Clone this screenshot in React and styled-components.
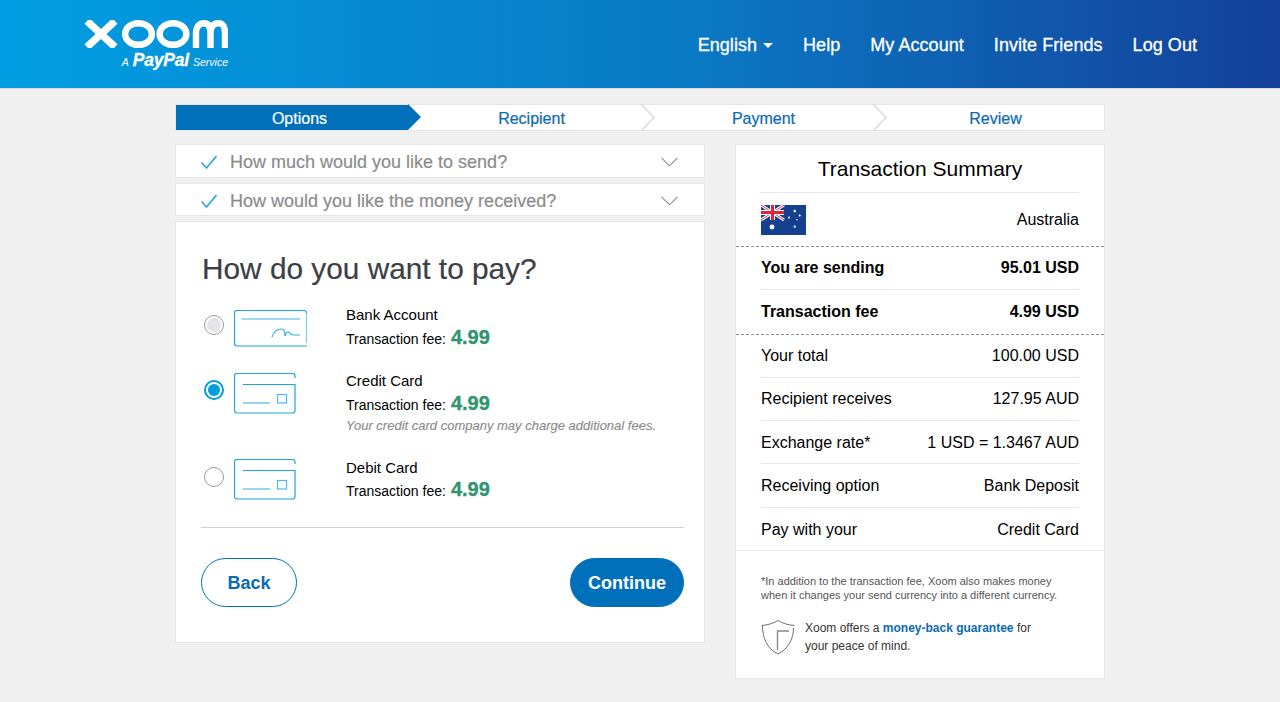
import React from "react";
import styled, { createGlobalStyle } from "styled-components";

const GlobalStyle = createGlobalStyle`
  html, body { margin: 0; padding: 0; background: #f0f0f0; }
  body { font-family: "Liberation Sans", Arial, sans-serif; color: #000; }
  * { box-sizing: border-box; }
`;

const Page = styled.div`
  width: 1280px;
  height: 702px;
  overflow: hidden;
  background: #f0f0f0;
`;

const Header = styled.header`
  height: 89px;
  padding: 20px 83px 0 84px;
  display: flex;
  justify-content: space-between;
  background: linear-gradient(90deg, #009ee2 0%, #0a78c4 55%, #14409a 100%);
  border-bottom: 1px solid #dcdcdc;
`;

const Logo = styled.div`
  width: 144px;
  display: flex;
  flex-direction: column;
  align-items: flex-end;
  color: #fff;
  svg { display: block; }
`;

const LogoSub = styled.div`
  margin-top: 4px;
  display: flex;
  align-items: baseline;
  gap: 4px;
  font-size: 10.5px;
  font-style: italic;
  line-height: 16px;
  b {
    font-size: 17.5px;
    font-weight: 700;
    letter-spacing: -0.2px;
    -webkit-text-stroke: 0.3px #fff;
  }
`;

const Nav = styled.nav`
  display: flex;
  gap: 30px;
  padding: 12px 0 0 0;
  height: 38px;
`;

const NavLink = styled.a`
  color: #fff;
  font-size: 18px;
  line-height: 21px;
  letter-spacing: 0.05px;
  -webkit-text-stroke: 0.3px #fff;
  display: flex;
  align-items: center;
  gap: 6px;
`;

const Caret = styled.span`
  width: 0;
  height: 0;
  border-left: 5px solid transparent;
  border-right: 5px solid transparent;
  border-top: 5px solid #fff;
`;

const Content = styled.main`
  width: 930px;
  margin: 15px 0 0 175px;
`;

const Stepper = styled.ol`
  list-style: none;
  margin: 0;
  padding: 0;
  height: 27px;
  display: flex;
  background: #fff;
  border: 1px solid #e6e6e6;
`;

const Step = styled.li`
  position: relative;
  flex: 1;
  padding-left: 15px;
  text-align: center;
  font-size: 16px;
  line-height: 27px;
  -webkit-text-stroke: 0.2px ${(p) => (p.$active ? "#fff" : "#0a6ab4")};
  color: ${(p) => (p.$active ? "#fff" : "#0a6ab4")};
  background: ${(p) => (p.$active ? "#0070ba" : "transparent")};
  svg {
    position: absolute;
    top: -1px;
    left: ${(p) => (p.$active ? "100%" : "calc(100% + 1px)")};
    z-index: 1;
  }
`;

const Columns = styled.div`
  margin-top: 13px;
  display: flex;
  justify-content: space-between;
  align-items: flex-start;
`;

const LeftColumn = styled.div`
  width: 530px;
  display: flex;
  flex-direction: column;
  gap: 5px;
`;

const Collapsed = styled.div`
  height: ${(p) => p.$h}px;
  padding: ${(p) => 36 - p.$h}px 26px 0 25px;
  display: flex;
  align-items: center;
  background: #fff;
  border: 1px solid #e6e6e6;
  color: #8c8c8c;
  font-size: 18px;
  -webkit-text-stroke: 0.2px #8c8c8c;
  svg:first-child { margin-right: 12px; }
  span { flex: 1; }
`;

const PayCard = styled.section`
  height: 422px;
  padding: 28px 20px 0 25px;
  background: #fff;
  border: 1px solid #e6e6e6;
`;

const Heading = styled.h2`
  margin: 0 0 19px 1px;
  font-size: 29.8px;
  line-height: 37px;
  font-weight: 400;
  color: #3b4045;
  -webkit-text-stroke: 0.2px #3b4045;
`;

const Methods = styled.div`
  display: flex;
  flex-direction: column;
  height: 222px;
  border-bottom: 1px solid #cfcfcf;
`;

const Method = styled.div`
  height: ${(p) => p.$h}px;
  display: grid;
  grid-template-columns: 33px 112px 1fr;
  align-items: start;
`;

const Radio = styled.span`
  margin: ${(p) => p.$top}px 0 0 3px;
  width: 20px;
  height: 20px;
  border-radius: 50%;
  border: 1.5px solid #9a9a9a;
  background: #fff;
  display: flex;
  align-items: center;
  justify-content: center;
  ${(p) => p.$checked && "border: 2px solid #009cde;"}
  &::after {
    content: "";
    width: ${(p) => (p.$checked ? 12 : 14)}px;
    height: ${(p) => (p.$checked ? 12 : 14)}px;
    border-radius: 50%;
    background: ${(p) => (p.$checked ? "#009cde" : p.$disabled ? "#e4e4e6" : "transparent")};
  }
`;

const MethodIcon = styled.div`
  margin-top: ${(p) => p.$top}px;
  svg { display: block; }
`;

const MethodText = styled.div`
  font-size: 14px;
  line-height: 16px;
  padding-top: ${(p) => p.$top || 0}px;
`;

const MethodName = styled.div`
  font-size: 15px;
`;

const FeeLine = styled.div`
  margin-top: ${(p) => p.$gap ?? 2}px;
  height: 24px;
  display: flex;
  align-items: baseline;
  gap: 5px;
  line-height: 24px;
  b {
    font-size: 20px;
    color: #2f9470;
    -webkit-text-stroke: 0.3px #2f9470;
  }
`;

const Note = styled.div`
  margin-top: 3px;
  font-size: 13px;
  line-height: 16px;
  font-style: italic;
  color: #8c8c8c;
  -webkit-text-stroke: 0.15px #8c8c8c;
`;

const Actions = styled.div`
  margin-top: 30px;
  display: flex;
  justify-content: space-between;
`;

const Pill = styled.button`
  height: 49px;
  width: ${(p) => (p.$primary ? 114 : 96)}px;
  border-radius: 25px;
  border: 1px solid #0070ba;
  background: ${(p) => (p.$primary ? "#0070ba" : "#fff")};
  color: ${(p) => (p.$primary ? "#fff" : "#0a6ab4")};
  font-family: inherit;
  font-size: 18px;
  font-weight: 700;
  padding: 1px 0 0 0;
`;

const Summary = styled.aside`
  width: 370px;
  height: 535px;
  background: #fff;
  border: 1px solid #e6e6e6;
`;

const SummaryTitle = styled.h3`
  margin: 0 25px;
  height: 48px;
  line-height: 48px;
  text-align: center;
  font-size: 21px;
  font-weight: 400;
  border-bottom: 1px solid #e6e6e6;
`;

const CountryRow = styled.div`
  height: 54px;
  padding: 0 25px;
  display: flex;
  align-items: center;
  justify-content: space-between;
  font-size: 16px;
  border-bottom: 1px dashed #8a8a8a;
`;

const Row = styled.div`
  margin: 0 25px;
  height: 43.3px;
  padding-top: 0.7px;
  display: flex;
  align-items: center;
  justify-content: space-between;
  font-size: 16px;
  font-weight: ${(p) => (p.$bold ? 700 : 400)};
  border-bottom: 1px solid #e6e6e6;
  &:last-child {
    border-bottom: 0;
  }
`;

const DashedSep = styled.div`
  border-bottom: 1px dashed #8a8a8a;
  ${Row}:last-child { border-bottom: 0; }
`;

const RowsEnd = styled.div`
  border-bottom: 1px solid #e6e6e6;
  ${Row}:last-child {
    height: 42.3px;
    padding-top: 2.7px;
  }
`;

const Footnote = styled.p`
  margin: 0;
  padding: 23px 25px 0 25px;
  font-size: 11px;
  line-height: 14px;
  color: #555;
`;

const Guarantee = styled.div`
  margin-top: 17px;
  padding: 0 25px;
  display: flex;
  gap: 10px;
  font-size: 12px;
  line-height: 18px;
  color: #333;
  svg { flex: none; margin-top: 1px; }
  b { color: #0a6ab4; }
`;

function Chevron({ tone = "#d9d9d9" }) {
  return (
    <svg width="14" height="27" viewBox="0 0 14 27" fill="#fff">
      <path d="M0 0 L13 13.5 L0 27" stroke={tone} strokeWidth="1.4" />
    </svg>
  );
}

function ActiveArrow() {
  return (
    <svg width="13" height="26" viewBox="0 0 13 26">
      <path d="M0 0 L13 13 L0 26 Z" fill="#0070ba" />
    </svg>
  );
}

function Check() {
  return (
    <svg width="17" height="14" viewBox="0 0 17 14" fill="none">
      <path d="M0.5 7.5 L5.5 13 L15.5 1" stroke="#18a3e0" strokeWidth="1.5" />
    </svg>
  );
}

function DownChevron() {
  return (
    <svg width="17" height="10" viewBox="0 0 17 10" fill="none">
      <path d="M0.5 0.8 L8.5 8.8 L16.5 0.8" stroke="#8c8c8c" strokeWidth="1.1" />
    </svg>
  );
}

function LogoMark() {
  return (
    <svg width="144" height="28" viewBox="0 0 144 28" fill="none" stroke="#fff" strokeWidth="6.4">
      <path d="M3 1 L31 27 M31 1 L3 27" strokeWidth="7.4" />
      <ellipse cx="54.5" cy="14" rx="13.4" ry="10.8" />
      <ellipse cx="89" cy="14" rx="13.4" ry="10.8" />
      <path d="M112 28 V13 C112 6 116 3.2 120 3.2 C124 3.2 126.5 6 126.5 13 V28 M126.5 13 C126.5 6 130 3.2 134 3.2 C139 3.2 141 6 141 13 V28" />
    </svg>
  );
}

function BankIcon() {
  return (
    <svg width="74" height="37" viewBox="0 0 74 37" fill="none" stroke="#1aa7e0" strokeWidth="1.2">
      <path d="M3 36 H73 M3 36 Q0.5 36 0.5 33.5 V3 Q0.5 0.5 3 0.5 H70 Q72.5 0.5 72.5 3" />
      <path d="M72.5 3 V33" stroke="#7fcdee" />
      <path d="M7.5 9 H66" stroke="#7fcdee" strokeWidth="1.6" />
      <path d="M38 27 C40 21 44 19 47 19 C50 19 51 22 51 26 C52 22 54 21 56 23 C57 25 59 25 60 24.5 M60 25 H66" stroke="#35b0e4" />
    </svg>
  );
}

function CardIcon() {
  return (
    <svg width="62" height="41" viewBox="0 0 62 41" fill="none" stroke="#1aa7e0" strokeWidth="1.2">
      <path d="M61 5 V3 Q61 0.5 58.5 0.5 H3 Q0.5 0.5 0.5 3 V37.5 Q0.5 40 3 40 H58.5 Q61 40 61 37.5 V11.5 H9" />
      <path d="M9 30 H36" stroke="#4dbbe8" />
      <rect x="43.5" y="21.5" width="9" height="8.5" stroke="#4dbbe8" />
    </svg>
  );
}

function AusFlag() {
  const stars = [[33.7, 6, 1.2], [28, 12.5, 1], [38.7, 10.5, 1], [36, 14.7, 0.7], [33.7, 21.7, 1.1]];
  return (
    <svg width="45" height="30" viewBox="0 0 45 30">
      <rect width="45" height="30" fill="#14408f" />
      <path d="M0 0 L23 15 M23 0 L0 15" stroke="#fff" strokeWidth="3" />
      <path d="M0 0 L23 15 M23 0 L0 15" stroke="#e0324a" strokeWidth="1" />
      <path d="M11.5 0 V15 M0 7.5 H23" stroke="#fff" strokeWidth="5" />
      <path d="M11.5 0 V15 M0 7.5 H23" stroke="#e0223c" strokeWidth="3" />
      <circle cx="11" cy="22" r="2.4" fill="#fff" />
      {stars.map(([x, y, r]) => (
        <circle key={`${x}-${y}`} cx={x} cy={y} r={r} fill="#fff" />
      ))}
    </svg>
  );
}

function Shield() {
  return (
    <svg width="34" height="35" viewBox="0 0 34 35" fill="none" stroke="#6f6f6f">
      <path d="M0.5 5.5 C7 5 12 3.5 17 0.5 C22 3.5 27 5 33.5 5.5" />
      <path d="M1.5 5.5 C1.5 18 6 28.5 17 34 C28 28.5 32.5 18 32.5 8" />
      <path d="M16.5 30 V11 H28" strokeWidth="1.4" stroke="#8a8a8a" />
    </svg>
  );
}

const steps = ["Options", "Recipient", "Payment", "Review"];

const totals = [
  ["Your total", "100.00 USD"],
  ["Recipient receives", "127.95 AUD"],
  ["Exchange rate*", "1 USD = 1.3467 AUD"],
  ["Receiving option", "Bank Deposit"],
  ["Pay with your", "Credit Card"],
];

export default function App() {
  return (
    <Page>
      <GlobalStyle />
      <Header>
        <Logo>
          <LogoMark />
          <LogoSub>
            <span>A</span>
            <b>PayPal</b>
            <span>Service</span>
          </LogoSub>
        </Logo>
        <Nav>
          <NavLink>English <Caret /></NavLink>
          <NavLink>Help</NavLink>
          <NavLink>My Account</NavLink>
          <NavLink>Invite Friends</NavLink>
          <NavLink>Log Out</NavLink>
        </Nav>
      </Header>
      <Content>
        <Stepper>
          {steps.map((s, i) => (
            <Step key={s} $active={i === 0}>
              {s}
              {i === 0 && <ActiveArrow />}
              {(i === 1 || i === 2) && <Chevron />}
            </Step>
          ))}
        </Stepper>
        <Columns>
          <LeftColumn>
            <Collapsed $h={34}>
              <Check />
              <span>How much would you like to send?</span>
              <DownChevron />
            </Collapsed>
            <Collapsed $h={33}>
              <Check />
              <span>How would you like the money received?</span>
              <DownChevron />
            </Collapsed>
            <PayCard>
              <Heading>How do you want to pay?</Heading>
              <Methods>
                <Method $h={67}>
                  <Radio $top={9} $disabled />
                  <MethodIcon $top={4}><BankIcon /></MethodIcon>
                  <MethodText $top={1}>
                    <MethodName>Bank Account</MethodName>
                    <FeeLine>Transaction fee: <b>4.99</b></FeeLine>
                  </MethodText>
                </Method>
                <Method $h={87}>
                  <Radio $top={7} $checked />
                  <MethodIcon $top={0}><CardIcon /></MethodIcon>
                  <MethodText>
                    <MethodName>Credit Card</MethodName>
                    <FeeLine>Transaction fee: <b>4.99</b></FeeLine>
                    <Note>Your credit card company may charge additional fees.</Note>
                  </MethodText>
                </Method>
                <Method $h={66}>
                  <Radio $top={7} />
                  <MethodIcon $top={-1}><CardIcon /></MethodIcon>
                  <MethodText>
                    <MethodName>Debit Card</MethodName>
                    <FeeLine $gap={1}>Transaction fee: <b>4.99</b></FeeLine>
                  </MethodText>
                </Method>
              </Methods>
              <Actions>
                <Pill>Back</Pill>
                <Pill $primary>Continue</Pill>
              </Actions>
            </PayCard>
          </LeftColumn>
          <Summary>
            <SummaryTitle>Transaction Summary</SummaryTitle>
            <CountryRow>
              <AusFlag />
              <span>Australia</span>
            </CountryRow>
            <DashedSep>
              <Row $bold><span>You are sending</span><span>95.01 USD</span></Row>
              <Row $bold><span>Transaction fee</span><span>4.99 USD</span></Row>
            </DashedSep>
            <RowsEnd>
              {totals.map(([label, value]) => (
                <Row key={label}><span>{label}</span><span>{value}</span></Row>
              ))}
            </RowsEnd>
            <Footnote>
              *In addition to the transaction fee, Xoom also makes money when it changes your send currency into a different currency.
            </Footnote>
            <Guarantee>
              <Shield />
              <div>Xoom offers a <b>money-back guarantee</b> for<br />your peace of mind.</div>
            </Guarantee>
          </Summary>
        </Columns>
      </Content>
    </Page>
  );
}
